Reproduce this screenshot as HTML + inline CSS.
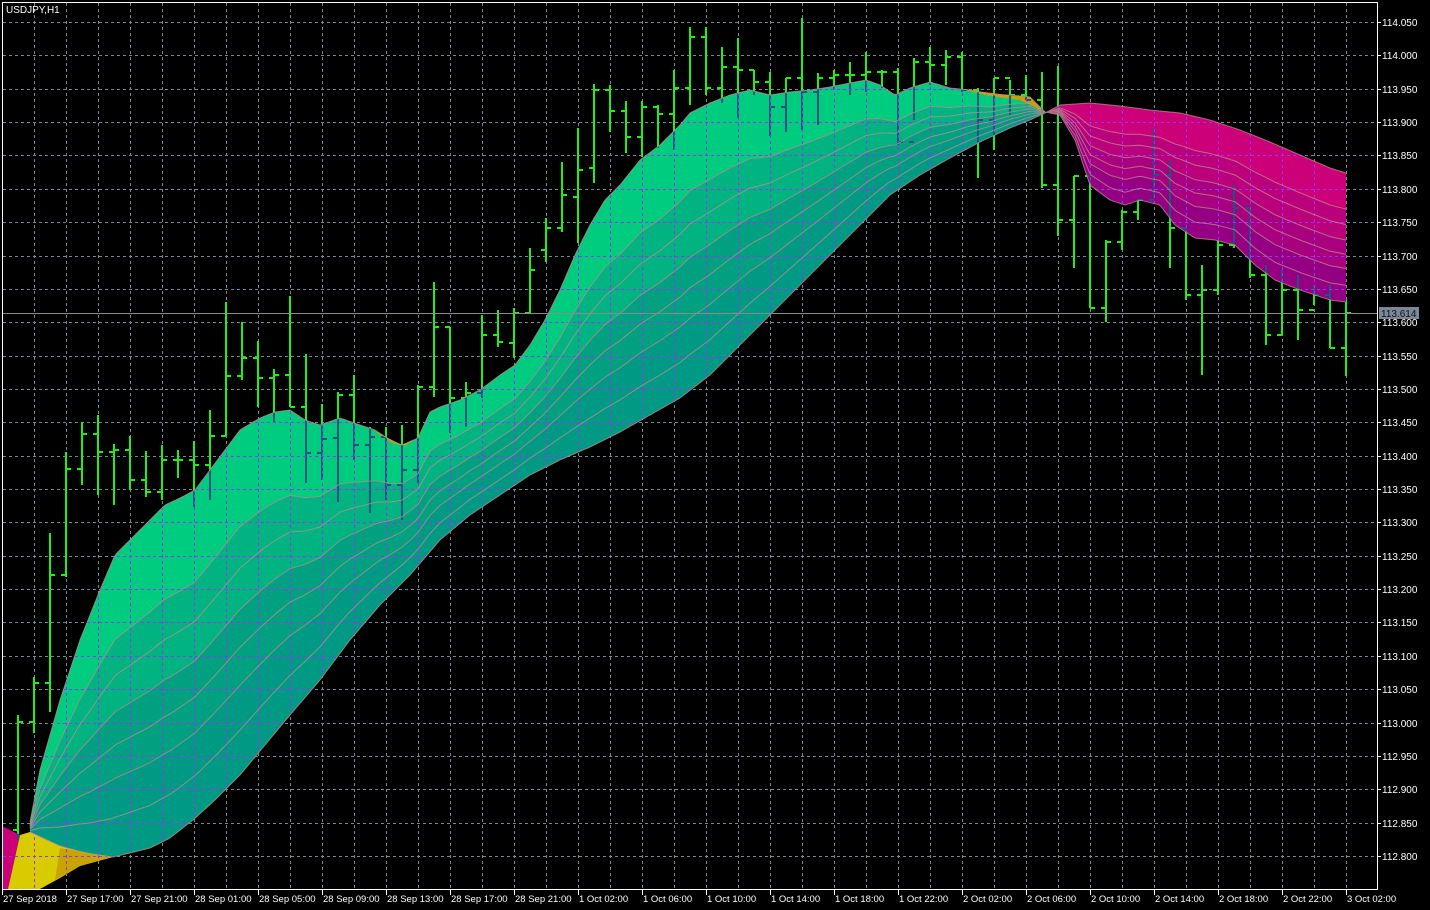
<!DOCTYPE html>
<html><head><meta charset="utf-8"><style>
html,body{margin:0;padding:0;background:#000;}
svg{display:block;}
text{font-family:"Liberation Sans",sans-serif;font-size:10px;fill:#fff;}
</style></head><body>
<svg id="c" width="1430" height="910" xmlns="http://www.w3.org/2000/svg">
<rect width="1430" height="910" fill="#000"/>
<g id="gridG" stroke="#778899" stroke-width="1" stroke-dasharray="3,3" fill="none"></g>
<g id="barsG" stroke="#22ee11" stroke-width="2" fill="none"></g>
<g id="fillG"></g>
<defs><clipPath id="fc"></clipPath></defs>
<g clip-path="url(#fc)">
<g id="darkBars" stroke="#1d5580" stroke-width="2" fill="none"></g>
<g id="gridP" stroke="#9a30ff" stroke-width="1" stroke-dasharray="3,3" fill="none"></g>
</g>
<g id="linesG" fill="none" stroke="#c09090" stroke-width="1" opacity="0.75"></g>
<line x1="2" y1="313.5" x2="1377" y2="313.5" stroke="#8a8a8a" stroke-width="1"/>
<rect x="2.5" y="2.5" width="1375" height="887" fill="none" stroke="#fff" stroke-width="1"/>
<text x="6" y="13">USDJPY,H1</text>
<g id="axisG"></g>
<rect x="1379" y="307" width="40" height="12" fill="#7a8898"/>
<text x="1381" y="317" style="fill:#111">113.614</text>
</svg>
<script>
var NS="http://www.w3.org/2000/svg";
function el(t,a,p){var e=document.createElementNS(NS,t);for(var k in a)e.setAttribute(k,a[k]);if(p)p.appendChild(e);return e;}
function $(i){return document.getElementById(i);}
// grid
function grid(g){
 for(var x=34;x<1377;x+=32)el('line',{x1:x+.5,y1:3,x2:x+.5,y2:889},g);
 for(var i=0;i<26;i++){var y=Math.round(22+33.36*i)+.5;el('line',{x1:3,y1:y,x2:1377,y2:y},g);}
}
grid($('gridG'));grid($('gridP'));
// axis
var ax=$('axisG');
var prices=[];
for(var i=0;i<26;i++){var y=Math.round(22+33.36*i);var p=(114.05-0.05*i).toFixed(3);
 el('line',{x1:1377,y1:y+.5,x2:1381,y2:y+.5,stroke:'#fff'},ax);
 var t=el('text',{x:1382,y:y+4},ax);t.textContent=p;}
var labs=["27 Sep 2018","27 Sep 17:00","27 Sep 21:00","28 Sep 01:00","28 Sep 05:00","28 Sep 09:00","28 Sep 13:00","28 Sep 17:00","28 Sep 21:00","1 Oct 02:00","1 Oct 06:00","1 Oct 10:00","1 Oct 14:00","1 Oct 18:00","1 Oct 22:00","2 Oct 02:00","2 Oct 06:00","2 Oct 10:00","2 Oct 14:00","2 Oct 18:00","2 Oct 22:00","3 Oct 02:00"];
labs.forEach(function(s,i){var x=2+64*i;el('line',{x1:x+.5,y1:889,x2:x+.5,y2:895,stroke:'#fff'},ax);
 var t=el('text',{x:x+1,y:902,style:'font-size:9.5px'},ax);t.textContent=s;});
// bars [x,h,l,o,c]
var B=[[18,715,840,830,722],[34,677,733,722,683],[50,533,712,683,575],[66,452,577,575,469],[82,422,485,469,434],[98,415,495,434,452],[114,444,505,452,450],[130,436,490,450,480],[146,451,497,480,492],[162,445,500,492,460],[178,450,478,460,460],[194,441,507,460,465],[210,410,500,465,436],[226,302,436,436,376],[242,322,380,376,358],[258,341,407,358,378],[274,369,422,378,375],[290,296,407,375,407],[306,354,483,407,453],[322,404,480,453,439],[338,392,502,438,395],[354,375,460,395,445],[370,427,513,445,437],[386,427,500,437,485],[402,425,520,485,470],[418,385,483,470,387],[434,282,397,387,327],[450,327,433,327,398],[466,382,427,398,393],[482,315,398,393,335],[498,310,347,335,342],[514,308,358,343,313],[530,248,313,313,270],[546,218,262,250,228],[562,162,232,228,195],[578,128,243,197,170],[594,84,183,168,90],[610,85,132,90,111],[626,101,153,111,137],[642,101,157,137,107],[658,105,148,107,114],[674,70,150,114,88],[690,27,105,88,37],[706,27,95,37,88],[722,47,103,88,67],[738,38,118,67,70],[754,70,95,70,82],[770,72,136,82,107],[786,78,132,107,78],[802,18,130,78,92],[818,73,125,92,78],[834,70,90,78,75],[850,62,95,75,75],[866,52,92,75,72],[882,70,88,72,72],[898,68,145,72,142],[914,58,120,142,62],[930,47,85,62,65],[946,50,85,65,57],[962,52,92,57,90],[978,88,178,90,120],[994,78,150,120,78],[1010,80,115,78,95],[1026,75,100,95,100],[1042,72,188,100,185],[1058,66,236,185,220],[1074,176,268,220,176],[1090,180,308,176,308],[1106,240,322,308,242],[1122,210,250,242,212],[1138,198,220,212,200],[1154,128,198,200,175],[1170,160,268,175,228],[1186,228,300,228,295],[1202,265,375,295,290],[1218,240,295,290,245],[1234,185,248,245,208],[1250,208,278,208,275],[1266,265,345,275,335],[1282,270,335,335,290],[1298,275,340,290,310],[1314,285,305,310,295],[1330,285,348,295,348],[1346,300,376,348,313]];
function bars(g){B.forEach(function(b){var x=b[0];
 el('line',{x1:x,y1:b[1],x2:x,y2:b[2]},g);
 el('line',{x1:x-5,y1:b[3],x2:x,y2:b[3]},g);
 el('line',{x1:x,y1:b[4],x2:x+5,y2:b[4]},g);});}
bars($('barsG'));bars($('darkBars'));
// curves
var F=[[2,828],[30,822],[40,770],[60,700],[80,640],[100,590],[115,555],[130,540],[150,520],[165,505],[180,498],[195,490],[210,470],[225,450],[240,430],[260,418],[275,412],[290,410],[305,420],[320,425],[340,418],[360,425],[375,430],[390,440],[402,445],[418,438],[430,412],[440,407],[460,400],[480,390],[500,375],[515,365],[530,345],[545,320],[560,290],[575,255],[590,225],[605,200],[620,185],[640,160],[660,145],[680,125],[690,113],[710,103],[730,95],[750,90],[770,95],[790,92],[810,90],[830,87],[850,83],[866,80],[880,85],[895,95],[910,88],[930,82],[950,88],[970,90],[990,95],[1010,95],[1030,97],[1045,112],[1060,115],[1075,140],[1090,185],[1110,200],[1125,205],[1140,200],[1160,205],[1175,225],[1195,238],[1215,240],[1235,245],[1255,265],[1275,280],[1300,290],[1330,300],[1346,302]];
var S=[[2,830],[30,832],[60,846],[90,854],[113,857],[130,853],[150,848],[170,838],[193,820],[215,800],[240,775],[265,745],[290,715],[320,680],[350,640],[380,605],[410,575],[440,540],[470,515],[500,495],[530,475],[560,460],[590,447],[620,432],[650,415],[680,398],[710,375],[740,345],[770,315],[800,285],[830,255],[860,225],[890,195],[920,175],[950,158],[980,142],[1010,128],[1030,120],[1045,113],[1060,105],[1090,103],[1120,106],[1150,110],[1180,113],[1210,120],[1240,130],[1270,142],[1300,155],[1330,168],[1346,173]];
function ip(a,x){for(var i=1;i<a.length;i++){if(x<=a[i][0]){var p=a[i-1],q=a[i];return p[1]+(q[1]-p[1])*(x-p[0])/(q[0]-p[0]);}}return a[a.length-1][1];}
function xsR(a,b){var r=[];for(var x=a;x<b;x+=2)r.push(x);r.push(b);return r;}
function cy(x,t,rev){var f=ip(F,x),s=ip(S,x);return rev? s+(f-s)*t : f+(s-f)*t;}
var fg=$('fillG'),fc=$('fc'),lg=$('linesG');
function band(xs,t0,t1,col,rev){var pts=[];xs.forEach(function(x){pts.push(x+','+cy(x,t0,rev).toFixed(1));});
 for(var i=xs.length-1;i>=0;i--)pts.push(xs[i]+','+cy(xs[i],t1,rev).toFixed(1));
 el('polygon',{points:pts.join(' '),fill:col},fg);}
function outline(xs,rev,clip){var pts=[];xs.forEach(function(x){pts.push(x+','+cy(x,0,rev).toFixed(1));});
 for(var i=xs.length-1;i>=0;i--)pts.push(xs[i]+','+cy(xs[i],1,rev).toFixed(1));
 el('polygon',{points:pts.join(' ')},clip);}
function line(xs,t,rev){var pts=xs.map(function(x){return x+','+cy(x,t,rev).toFixed(1);});el('polyline',{points:pts.join(' ')},lg);}
var G=xsR(30,1045),M=xsR(1045,1346);
var T=[0,0.28,0.52,0.74,1];
var gc=['#00cc80','#00b381','#00a080','#009a84'];
var mc=['#cc0078','#bb007c','#a8007f','#950082'];
for(var i=0;i<4;i++){band(G,T[i],T[i+1],gc[i],false);band(M,T[i],T[i+1],mc[i],true);}
outline(G,false,fc);outline(M,true,fc);
// start region
var sp=[['2,826 20,835 8,889 2,889','#cc0078'],['20,835 30,832 60,846 90,854 113,857 80,866 60,878 40,889 8,889','#d8cc00'],['60,848 113,857 80,866 55,880','#c8a400']];
sp.forEach(function(s){el('polygon',{points:s[0],fill:s[1]},fg);el('polygon',{points:s[0]},fc);});
// gold crossovers
var gp=[['372,430 402,445 418,438 405,446 392,443','#b8a800'],['960,89 1000,94 1030,97 1045,112 1020,100 990,96','#c8a000']];
gp.forEach(function(s){el('polygon',{points:s[0],fill:s[1]},fg);});
[0.28,0.4,0.52,0.63,0.74,0.87].forEach(function(t){line(G,t,false);line(M,t,true);});
line(G,0,false);line(G,1,false);line(M,0,true);line(M,1,true);
</script>
</body></html>
